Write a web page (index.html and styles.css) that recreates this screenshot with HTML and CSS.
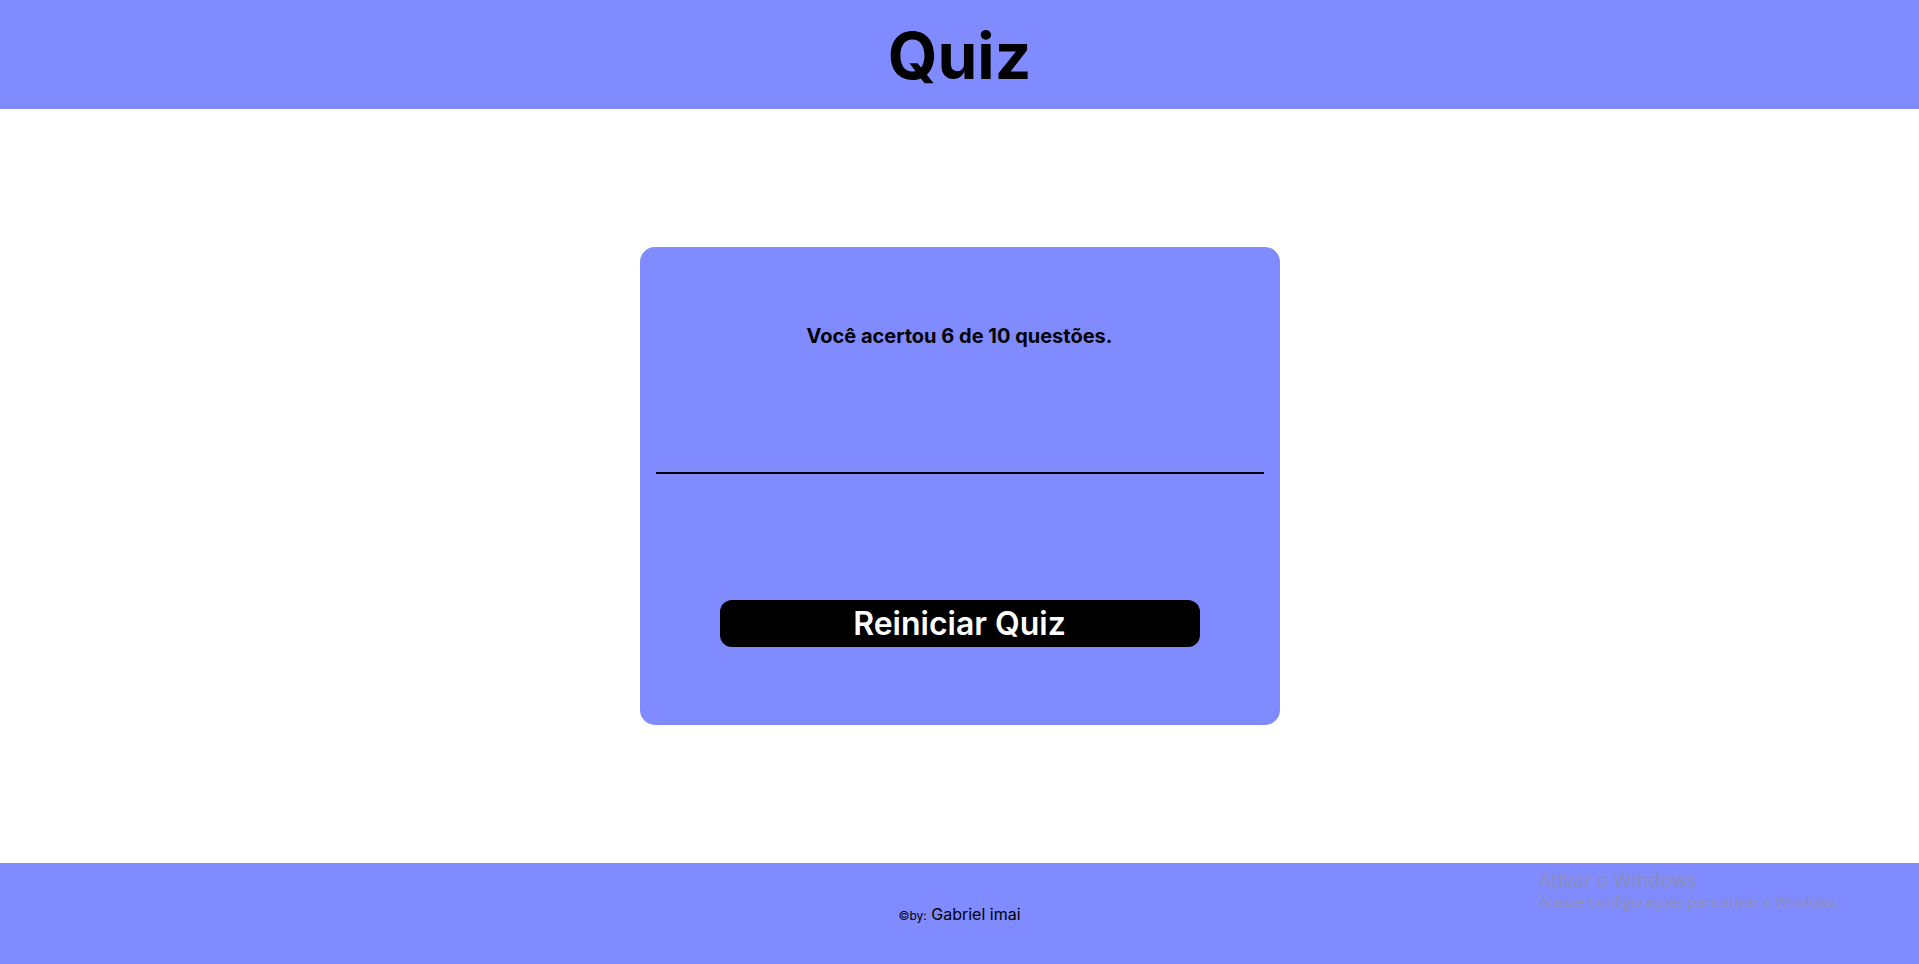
FILE: index.html
```html
<!DOCTYPE html>
<html lang="pt-BR">
<head>
<meta charset="utf-8">
<title>Quiz</title>
<link rel="stylesheet" href="styles.css">
</head>
<body>
<header class="topbar">
  <h1 class="title">Quiz</h1>
</header>
<main class="content">
  <section class="card">
    <p class="question">Você acertou 6 de 10 questões.</p>
    <hr class="divider">
    <div class="answers"></div>
    <button class="restart">Reiniciar Quiz</button>
  </section>
</main>
<footer class="footer">
  <p class="credit"><span class="copy">©by:</span> Gabriel imai</p>
</footer>
<div class="watermark">
  <div class="wm-title">Ativar o Windows</div>
  <div class="wm-sub">Acesse Configurações para ativar o Windows.</div>
</div>
</body>
</html>
```
FILE: styles.css
```css
* { box-sizing: border-box; }
html, body { margin: 0; padding: 0; }
body {
  font-family: Inter, "Noto Sans", sans-serif;
  background: #ffffff;
  color: #000;
  min-height: 964px;
  display: flex;
  flex-direction: column;
  position: relative;
}
.topbar {
  height: 109px;
  background: #808bff;
  display: flex;
  align-items: center;
  justify-content: center;
}
.title {
  margin: 0;
  font-size: 64px;
  font-weight: 700;
  line-height: 1;
  padding-top: 2px;
}
.content {
  height: 754px;
  display: flex;
  align-items: center;
  justify-content: center;
}
.card {
  width: 640px;
  height: 478px;
  background: #808bff;
  border-radius: 15px;
  padding: 0 16px 78px;
  display: flex;
  flex-direction: column;
  align-items: center;
}
.question {
  margin: 75px 0 0;
  height: 28px;
  line-height: 28px;
  font-size: 20px;
  font-weight: 700;
  text-align: center;
}
.divider {
  width: 100%;
  margin: 122px 0 0;
  border: 0;
  height: 2px;
  background: #000;
}
.answers {
  height: 126px;
}
.restart {
  width: 480px;
  height: 47px;
  background: #000;
  color: #fff;
  border: 0;
  border-radius: 12px;
  font-family: Inter, "Noto Sans", sans-serif;
  font-size: 32px;
  font-weight: 600;
  line-height: 1;
  padding: 0;
  cursor: pointer;
}
.footer {
  height: 101px;
  background: #808bff;
  display: flex;
  align-items: center;
  justify-content: center;
}
.credit {
  margin: 0;
  font-size: 16px;
  font-weight: 400;
}
.copy {
  font-size: 12px;
}
.watermark {
  position: absolute;
  left: 1539px;
  top: 867px;
  color: rgb(140, 142, 178);
  font-family: "Open Sans", "Noto Sans", sans-serif;
  pointer-events: none;
}
.wm-title {
  font-size: 19.5px;
  line-height: 25px;
}
.wm-sub {
  font-size: 14.3px;
  line-height: 20px;
}
```
